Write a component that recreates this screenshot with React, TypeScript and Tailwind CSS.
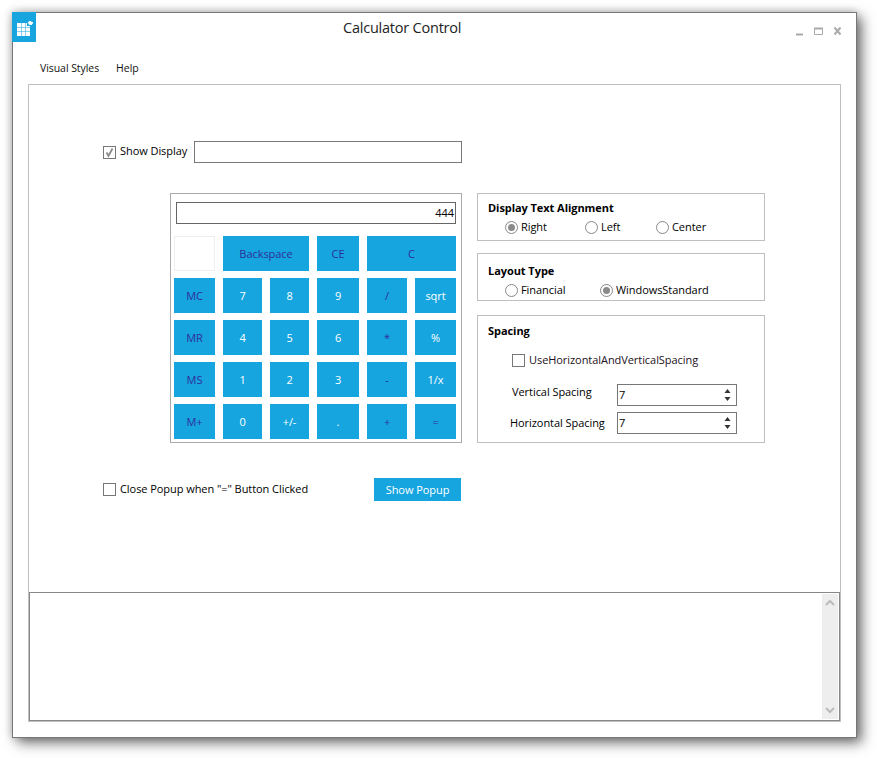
const font = { fontFamily: '"Open Sans", sans-serif' }

type Key = { label: string; blue?: boolean; span?: number; blank?: boolean }

const KEYS: Key[] = [
  { label: '', blank: true },
  { label: 'Backspace', blue: true, span: 2 },
  { label: 'CE', blue: true },
  { label: 'C', blue: true, span: 2 },
  { label: 'MC', blue: true },
  { label: '7' },
  { label: '8' },
  { label: '9' },
  { label: '/', blue: true },
  { label: 'sqrt' },
  { label: 'MR', blue: true },
  { label: '4' },
  { label: '5' },
  { label: '6' },
  { label: '*', blue: true },
  { label: '%' },
  { label: 'MS', blue: true },
  { label: '1' },
  { label: '2' },
  { label: '3' },
  { label: '-', blue: true },
  { label: '1/x' },
  { label: 'M+', blue: true },
  { label: '0' },
  { label: '+/-' },
  { label: '.' },
  { label: '+', blue: true },
  { label: '=', blue: true },
]

function CalcKey({ k }: { k: Key }) {
  if (k.blank) return <div className="border border-[#eeeeee] bg-white" />
  return (
    <button
      className={`bg-[#17a5df] text-[11px] pt-[2px] flex items-center justify-center ${k.span === 2 ? 'col-span-2' : ''} ${k.blue ? 'text-[#2e2e9e]' : 'text-white'}`}
    >
      {k.label}
    </button>
  )
}

function Check({ checked }: { checked?: boolean }) {
  return (
    <span className="w-[13px] h-[13px] border border-[#777777] flex items-center justify-center shrink-0">
      {checked && (
        <svg width="11" height="11" viewBox="0 0 11 11">
          <path d="M2.5 5.5 L4.5 9 L8.5 1.5" fill="none" stroke="#8a8a8a" strokeWidth="1.8" />
        </svg>
      )}
    </span>
  )
}

function Radio({ label, on, width }: { label: string; on?: boolean; width: string }) {
  return (
    <div className={`flex items-center gap-[3px] ${width}`}>
      <span className="w-[13px] h-[13px] rounded-full border border-[#888888] flex items-center justify-center shrink-0">
        {on && <span className="w-[7px] h-[7px] rounded-full bg-[#8a8a8a]" />}
      </span>
      <span>{label}</span>
    </div>
  )
}

function Spinner() {
  return (
    <div className="w-[120px] h-[22px] border border-[#777777] flex items-center justify-between pl-[1px] pr-[5px]">
      <span>7</span>
      <svg width="7" height="14" viewBox="0 0 7 14">
        <path d="M3.5 1 L6.5 5 H0.5 Z M0.5 9 H6.5 L3.5 13 Z" fill="#333333" />
      </svg>
    </div>
  )
}

export default function App() {
  return (
    <div className="w-[877px] h-[758px] bg-white pl-3 pt-3 overflow-hidden text-[11px] tracking-[-0.06px] text-black" style={font}>
      <div className="relative w-[845px] h-[726px] bg-white border border-[#777777] shadow-[5px_5px_12px_rgba(0,0,0,0.55),-1px_-1px_8px_rgba(0,0,0,0.2)] flex flex-col">
        {/* Title bar */}
        <div className="h-[29px] flex shrink-0">
          <div className="-ml-[1px] -mt-[1px] w-[24px] h-[30px] bg-[#17a5df] flex items-center justify-center shrink-0">
            <svg width="18" height="18" viewBox="0 0 18 18">
              <path d="M2 5h4v4H2zM6.5 5h4v4h-4zM11 5h4v4h-4zM2 9.5h4v4H2zM6.5 9.5h4v4h-4zM11 9.5h4v4h-4zM2 14h4v4H2zM6.5 14h4v4h-4zM11 14h4v4h-4z" fill="#ffffff" />
              <path d="M12 2h6v6h-6z" fill="#17a5df" />
              <path d="M14.5 3h1.5l.5 1h1.5v1.5l-1 .5v1h-1.5l-.5-.5-1 .5-.5-1.5-1-.5 1-1z" fill="#ffffff" />
            </svg>
          </div>
          <div className="ml-[307px] mt-[4px] text-[14.5px] leading-[22px] text-[#222222] tracking-[-0.22px]">Calculator Control</div>
          <div className="ml-auto flex items-start">
            <svg className="mr-[13px] mt-[13px]" width="47" height="10" viewBox="0 0 47 10">
              <path d="M0 8.5h7" stroke="#aaaaaa" strokeWidth="2" />
              <path d="M18.5 2.5h8v6h-8z" fill="none" stroke="#aaaaaa" />
              <path d="M18 2.5h9" stroke="#aaaaaa" strokeWidth="2" />
              <path d="M38.5 1.5l6 7M44.5 1.5l-6 7" stroke="#aaaaaa" strokeWidth="2" />
            </svg>
          </div>
        </div>

        {/* Menu */}
        <div className="h-[42px] flex items-center pl-[27px] gap-[17px] pt-[12px] shrink-0 text-[10.5px] text-[#111111]">
          <span>Visual Styles</span>
          <span>Help</span>
        </div>

        {/* Content panel */}
        <div className="ml-[15px] w-[813px] h-[638px] border border-[#c0c0c0] flex flex-col shrink-0">
          <div className="h-[507px] shrink-0 pl-[74px] pt-[56px]">
            <div className="flex items-center h-[22px]">
              <Check checked />
              <span className="ml-[4px] w-[74px] -mt-[2px]">Show Display</span>
              <div className="w-[268px] h-[22px] border border-[#777777]" />
            </div>

            <div className="flex mt-[30px] ml-[67px]">
              {/* Calculator */}
              <div className="w-[292px] h-[250px] border border-[#aaaaaa] pl-[3px] pt-[8px]">
                <div className="ml-[2px] w-[280px] h-[22px] border border-[#666666] text-right pr-[1px] leading-[20px]">444</div>
                <div className="mt-[12px] grid grid-cols-[41px_39px_39px_42px_40px_41px] auto-rows-[35px] gap-x-[8px] gap-y-[7px]">
                  {KEYS.map((k, i) => (
                    <CalcKey key={i} k={k} />
                  ))}
                </div>
              </div>

              {/* Options */}
              <div className="ml-[15px] w-[288px] flex flex-col">
                <div className="h-[48px] border border-[#c0c0c0] pl-[10px] pt-[6px]">
                  <div className="font-bold leading-[16px]">Display Text Alignment</div>
                  <div className="flex pl-[17px] leading-[18px] mt-[2px]">
                    <Radio label="Right" on width="w-[80px]" />
                    <Radio label="Left" width="w-[71px]" />
                    <Radio label="Center" width="w-[70px]" />
                  </div>
                </div>
                <div className="h-[48px] mt-[12px] border border-[#c0c0c0] pl-[10px] pt-[9px]">
                  <div className="font-bold leading-[16px]">Layout Type</div>
                  <div className="flex pl-[17px] leading-[18px] mt-[2px]">
                    <Radio label="Financial" width="w-[95px]" />
                    <Radio label="WindowsStandard" on width="w-[130px]" />
                  </div>
                </div>
                <div className="h-[128px] mt-[14px] border border-[#c0c0c0] pt-[7px] relative">
                  <div className="pl-[10px] font-bold leading-[16px]">Spacing</div>
                  <div className="flex items-center gap-[4px] pl-[34px] mt-[13px] h-[16px] text-[#221122]">
                    <Check />
                    <span>UseHorizontalAndVerticalSpacing</span>
                  </div>
                  <div className="flex items-center mt-[16px]">
                    <span className="w-[139px] pl-[34px] -mt-[6px]">Vertical Spacing</span>
                    <Spinner />
                  </div>
                  <div className="flex items-center mt-[6px]">
                    <span className="w-[139px] pl-[32px]">Horizontal Spacing</span>
                    <Spinner />
                  </div>
                </div>
              </div>
            </div>

            <div className="flex items-start mt-[35px]">
              <div className="flex items-center gap-[4px] w-[271px] mt-[3px]">
                <Check />
                <span>Close Popup when "=" Button Clicked</span>
              </div>
              <button className="w-[87px] h-[23px] bg-[#17a5df] text-white text-[11px] pt-[1px]">Show Popup</button>
            </div>
          </div>

          {/* Log box */}
          <div className="h-[129px] border border-[#888888] flex justify-end pt-[1px] pb-[1px] pr-[1px]">
            <div className="w-[16px] bg-[#eeeeee] flex flex-col items-center justify-between py-[5px]">
              <svg width="10" height="7" viewBox="0 0 10 7">
                <path d="M1 6 L5 2 L9 6" fill="none" stroke="#bbbbbb" strokeWidth="2" />
              </svg>
              <svg width="10" height="7" viewBox="0 0 10 7">
                <path d="M1 1 L5 5 L9 1" fill="none" stroke="#bbbbbb" strokeWidth="2" />
              </svg>
            </div>
          </div>
        </div>
      </div>
    </div>
  )
}
